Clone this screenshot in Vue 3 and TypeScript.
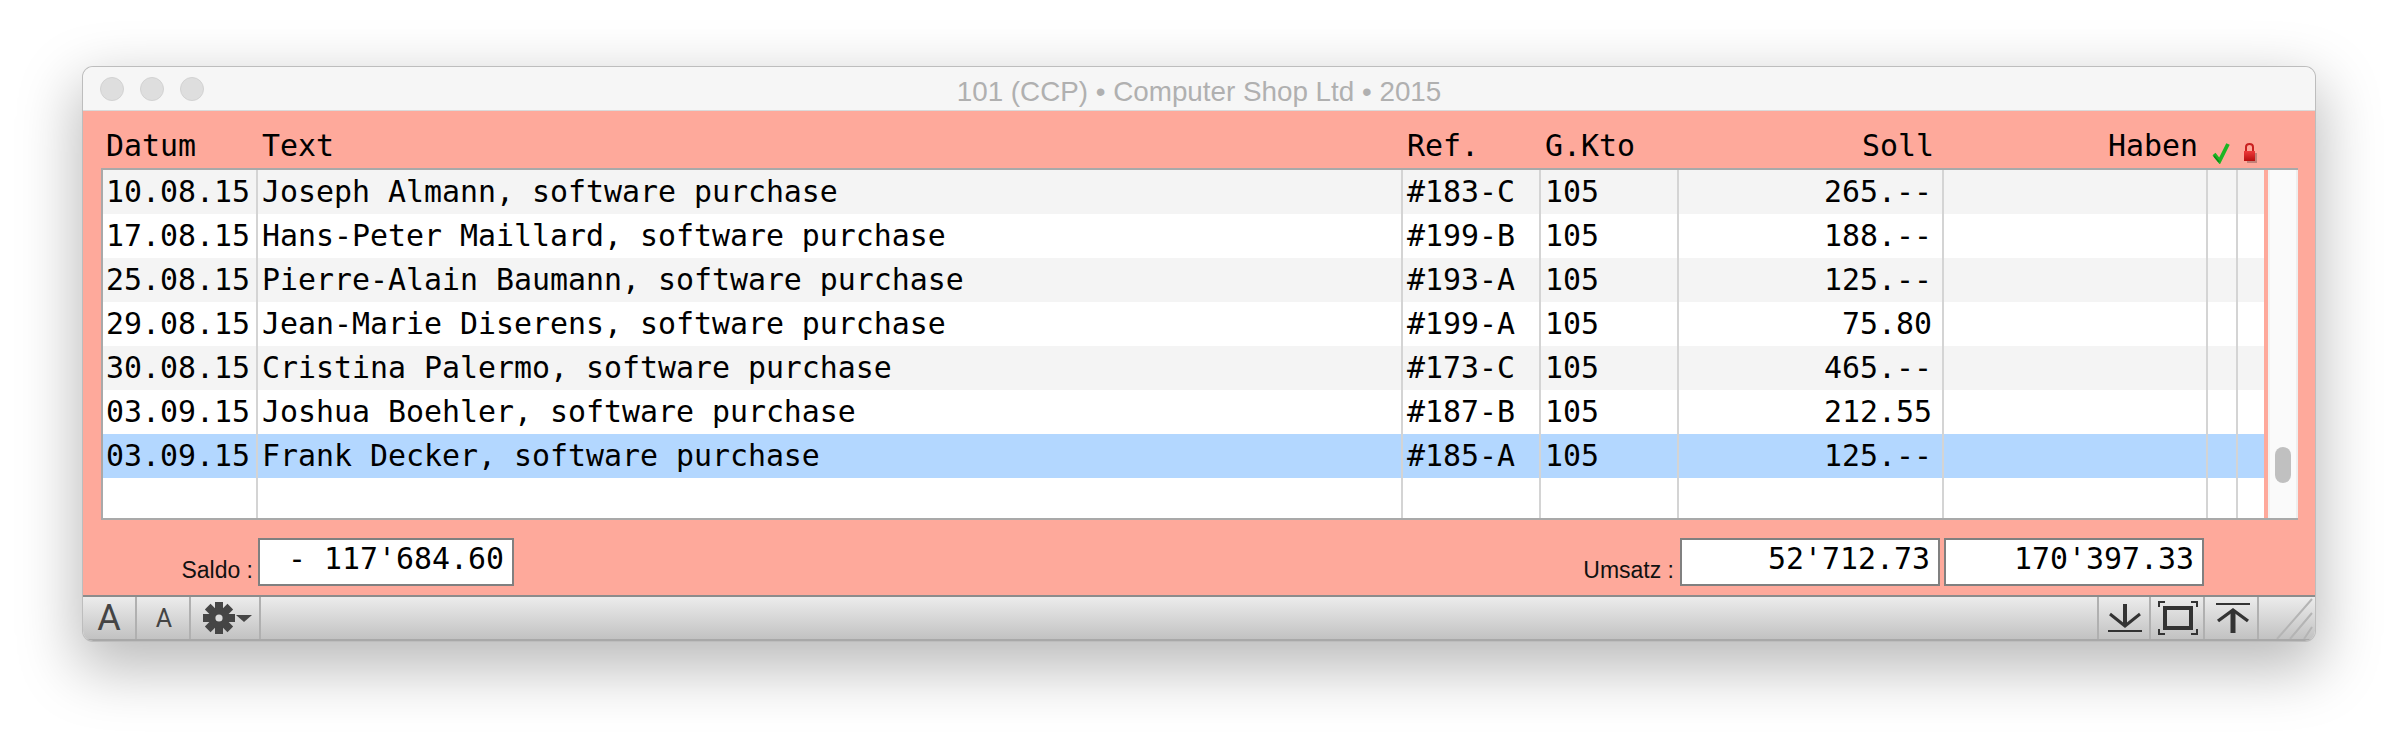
<script setup lang="ts">
interface Entry {
  date: string
  text: string
  ref: string
  account: string
  debit: string
  selected?: boolean
}

const entries: Entry[] = [
  { date: '10.08.15', text: 'Joseph Almann, software purchase', ref: '#183-C', account: '105', debit: '265.--' },
  { date: '17.08.15', text: 'Hans-Peter Maillard, software purchase', ref: '#199-B', account: '105', debit: '188.--' },
  { date: '25.08.15', text: 'Pierre-Alain Baumann, software purchase', ref: '#193-A', account: '105', debit: '125.--' },
  { date: '29.08.15', text: 'Jean-Marie Diserens, software purchase', ref: '#199-A', account: '105', debit: '75.80' },
  { date: '30.08.15', text: 'Cristina Palermo, software purchase', ref: '#173-C', account: '105', debit: '465.--' },
  { date: '03.09.15', text: 'Joshua Boehler, software purchase', ref: '#187-B', account: '105', debit: '212.55' },
  { date: '03.09.15', text: 'Frank Decker, software purchase', ref: '#185-A', account: '105', debit: '125.--', selected: true },
]

// acht Zähne für das Zahnrad
const teeth = [0, 45, 90, 135, 180, 225, 270, 315]
</script>

<template>
  <div class="page">
    <div class="window">
      <div class="titlebar">
        <div class="lights">
          <span class="light"></span>
          <span class="light"></span>
          <span class="light"></span>
        </div>
        <div class="title">101 (CCP) • Computer Shop Ltd • 2015</div>
      </div>

      <div class="content">
        <div class="cols head">
          <div class="cell">Datum</div>
          <div class="cell">Text</div>
          <div class="cell">Ref.</div>
          <div class="cell">G.Kto</div>
          <div class="cell num">Soll</div>
          <div class="cell num">Haben</div>
          <div class="cell mark check">
            <svg width="18" height="21" viewBox="0 0 18 21">
              <path d="M2 11 L7.5 18 L16 1" fill="none" stroke="#1bb523" stroke-width="3.8" />
              <path d="M2 13 L7 19" fill="none" stroke="#0c8a16" stroke-width="1.6" />
            </svg>
          </div>
          <div class="cell mark lock">
            <svg width="14" height="20" viewBox="0 0 14 20">
              <defs>
                <linearGradient id="lockbody" x1="0" y1="0" x2="0" y2="1">
                  <stop offset="0" stop-color="#ee3a3a" />
                  <stop offset="1" stop-color="#b80f0f" />
                </linearGradient>
              </defs>
              <rect x="3" y="10" width="10" height="10" fill="#a8706a" opacity="0.7" />
              <path d="M2 9 V4 Q2 1 5.5 1 Q9 1 9 4 V9" fill="none" stroke="#c92020" stroke-width="2" />
              <rect x="0" y="8" width="11" height="10" fill="url(#lockbody)" />
            </svg>
          </div>
        </div>

        <div class="table">
          <div class="rows">
            <div
              v-for="(entry, index) in entries"
              :key="index"
              class="cols row"
              :class="{ odd: index % 2 === 0, selected: entry.selected }"
            >
              <div class="cell">{{ entry.date }}</div>
              <div class="cell">{{ entry.text }}</div>
              <div class="cell">{{ entry.ref }}</div>
              <div class="cell">{{ entry.account }}</div>
              <div class="cell num">{{ entry.debit }}</div>
              <div class="cell"></div>
              <div class="cell"></div>
              <div class="cell"></div>
            </div>
            <div class="cols row blank">
              <div class="cell" v-for="n in 8" :key="n"></div>
            </div>
          </div>
          <div class="scrollbar">
            <div class="thumb"></div>
          </div>
        </div>

        <div class="totals">
          <label class="caption saldo">Saldo :</label>
          <div class="field saldo-field">- 117'684.60</div>
          <label class="caption umsatz">Umsatz :</label>
          <div class="field">52'712.73</div>
          <div class="field">170'397.33</div>
        </div>
      </div>

      <div class="toolbar">
        <button class="tool size-big">A</button>
        <button class="tool size-small">A</button>
        <button class="tool gear">
          <svg width="52" height="34" viewBox="0 0 52 34">
            <g transform="translate(17 17)">
              <rect
                v-for="deg in teeth"
                :key="deg"
                x="-4"
                y="-16"
                width="8"
                height="12"
                fill="#454545"
                :transform="`rotate(${deg})`"
              />
              <circle r="10" fill="#454545" />
              <circle r="3.6" fill="#dcdcdc" />
            </g>
            <path d="M34 14 H50 L42 21 Z" fill="#454545" />
          </svg>
        </button>
        <div class="spacer"></div>
        <button class="tool icon down">
          <svg width="36" height="32" viewBox="0 0 36 32">
            <path d="M18 2 V24" stroke="#333" stroke-width="4" fill="none" />
            <path d="M3 12 L18 24 L33 12" stroke="#333" stroke-width="3" fill="none" />
            <path d="M1 29 H35" stroke="#333" stroke-width="2" fill="none" />
          </svg>
        </button>
        <button class="tool icon fit">
          <svg width="40" height="34" viewBox="0 0 40 34">
            <rect x="7" y="7" width="26" height="20" fill="none" stroke="#333" stroke-width="4" />
            <path d="M1 6 V1 H7 M33 1 H39 V6 M39 28 V33 H33 M7 33 H1 V28" fill="none" stroke="#333" stroke-width="2" />
          </svg>
        </button>
        <button class="tool icon up">
          <svg width="36" height="32" viewBox="0 0 36 32">
            <path d="M1 2 H35" stroke="#333" stroke-width="2" fill="none" />
            <path d="M18 8 V31" stroke="#333" stroke-width="5" fill="none" />
            <path d="M3 19 L18 8 L33 19" stroke="#333" stroke-width="3.4" fill="none" />
          </svg>
        </button>
        <div class="grip">
          <svg width="55" height="44" viewBox="0 0 55 44">
            <path d="M18 44 L53 4 M31 44 L53 18 M45 44 L53 32" stroke="#b4b4b4" stroke-width="2" fill="none" />
          </svg>
        </div>
      </div>
    </div>
  </div>
</template>

<style scoped>
.page {
  height: 740px;
  box-sizing: border-box;
  padding: 67px 83px 0;
  background: #fff;
}

.window {
  width: 2232px;
  height: 574px;
  box-sizing: border-box;
  display: flex;
  flex-direction: column;
  border-radius: 10px;
  overflow: hidden;
  box-shadow: 0 0 0 1px #bdbdbd, 0 22px 60px 6px rgba(0, 0, 0, 0.27);
}

.titlebar {
  height: 44px;
  flex: none;
  display: flex;
  align-items: center;
  position: relative;
  background: #f6f6f6;
  border-bottom: 1px solid #dadada;
  box-sizing: border-box;
}

.lights {
  display: flex;
  gap: 16px;
  padding-left: 17px;
}

.light {
  width: 24px;
  height: 24px;
  box-sizing: border-box;
  border-radius: 50%;
  background: #dedede;
  border: 1px solid #d2d2d2;
}

.title {
  position: absolute;
  left: 0;
  right: 0;
  top: 9px;
  text-align: center;
  font: 27.8px "Liberation Sans", sans-serif;
  color: #b0b0b0;
}

.content {
  flex: 1;
  background: #fea99b;
  padding-left: 18px;
  display: flex;
  flex-direction: column;
}

.cols {
  display: grid;
  grid-template-columns: 155px 1145px 138px 138px 265px 264px 30px 26px;
  font: 29.9px "DejaVu Sans Mono", monospace;
  color: #000;
}

.head {
  height: 57px;
  margin-left: 2px;
  align-items: center;
  padding-top: 12px;
  box-sizing: border-box;
}

.head .cell {
  border-right: 0;
  white-space: nowrap;
}

.head .mark {
  display: flex;
  padding: 0;
  align-self: end;
  height: 21px;
  line-height: 0;
  overflow: visible;
  margin-bottom: 4px;
}

.head .check {
  margin-left: 4px;
}

.head .lock {
  margin-left: 6px;
}

.table {
  width: 2197px;
  height: 352px;
  box-sizing: border-box;
  display: flex;
  border: 2px solid #a9a9a9;
  border-right: 0;
}

.rows {
  width: 2161px;
  height: 100%;
  flex: none;
  background: #fff;
  display: flex;
  flex-direction: column;
}

.row {
  height: 44px;
  flex: none;
  background: #fff;
}

.row.odd {
  background: #f4f4f4;
}

.row.selected {
  background: #b3d7ff;
}

.row.blank {
  flex: 1;
}

.cell {
  padding: 0 4px;
  line-height: 43px;
  white-space: nowrap;
  overflow: hidden;
}

.cell:first-child {
  padding-left: 3px;
}

.row .cell {
  border-right: 2px solid #d4d4d4;
}

.row .cell:last-child {
  border-right: 0;
}

.num {
  text-align: right;
  padding-right: 10px;
}

.scrollbar {
  flex: 1;
  margin-left: 4px;
  background: #fafafa;
  border-left: 2px solid #f2f2f2;
  border-right: 2px solid #eee;
  display: flex;
  justify-content: center;
  align-items: flex-start;
  padding-top: 277px;
}

.thumb {
  width: 16px;
  height: 36px;
  border-radius: 8px;
  background: #c0c0c0;
}

.totals {
  flex: 1;
  display: flex;
  align-items: flex-start;
  padding-top: 18px;
  margin-left: -18px;
  padding-right: 111px;
}

.caption {
  font: 23px "Liberation Sans", sans-serif;
  color: #111;
  margin-top: 19px;
  white-space: nowrap;
}

.saldo {
  width: 170px;
  text-align: right;
  margin-right: 5px;
}

.umsatz {
  margin-left: auto;
  margin-right: 6px;
}

.field {
  width: 260px;
  height: 48px;
  box-sizing: border-box;
  background: #fff;
  border: 2px solid #808080;
  padding-right: 8px;
  text-align: right;
  font: 29.9px/38px "DejaVu Sans Mono", monospace;
  color: #000;
  margin-right: 4px;
}

.field:last-child {
  margin-right: 0;
}

.saldo-field {
  width: 256px;
  white-space: pre;
}

.toolbar {
  height: 46px;
  flex: none;
  box-sizing: border-box;
  display: flex;
  background: linear-gradient(#ececec, #c2c2c2);
  border-top: 2px solid #8c8c8c;
  border-bottom: 2px solid #a8a8a8;
}

.tool {
  padding: 0;
  background: none;
  border: 0;
  border-right: 2px solid #b0b0b0;
  display: flex;
  align-items: center;
  justify-content: center;
  color: #444;
  font-family: Roboto, sans-serif;
  font-weight: 400;
  line-height: 1;
}

.size-big {
  width: 54px;
  font-size: 36px;
}

.size-small {
  width: 54px;
  padding-left: 2px;
  font-size: 25px;
}

.gear {
  width: 70px;
  padding-left: 5px;
}

.spacer {
  flex: 1;
  border-right: 2px solid #b0b0b0;
}

.down {
  width: 52px;
  padding-left: 2px;
}

.fit {
  width: 54px;
  padding-left: 2px;
}

.up {
  width: 54px;
  padding-left: 3px;
}

.grip {
  width: 56px;
  display: flex;
  align-items: flex-end;
}
</style>

<style>
html,
body {
  margin: 0;
  background: #fff;
}
</style>
